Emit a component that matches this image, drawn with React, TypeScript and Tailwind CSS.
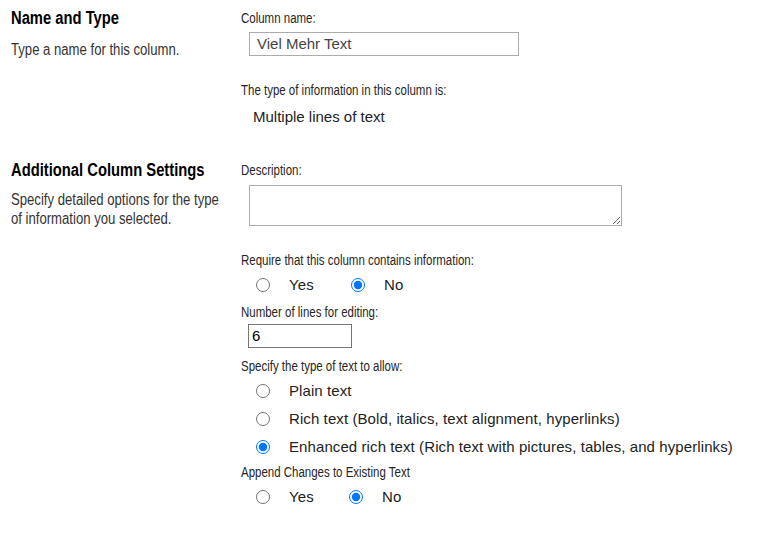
const sans = "font-['Liberation_Sans',Arial,sans-serif]";

// condensed look: plain sans squeezed horizontally
const Narrow = ({ children, className = "" }: { children: React.ReactNode; className?: string }) => (
  <div className={`${sans} ${className}`}>
    <span className="inline-block origin-left scale-x-[0.82] whitespace-nowrap">{children}</span>
  </div>
);

const Label = ({ children }: { children: React.ReactNode }) => (
  <Narrow className="text-[14px] leading-[15px] text-[#262626]">{children}</Narrow>
);

const Heading = ({ children }: { children: React.ReactNode }) => (
  <Narrow className="text-[18px] font-bold leading-[19px] text-black">{children}</Narrow>
);

const Radio = ({
  name,
  label,
  checked,
  width,
}: {
  name: string;
  label: string;
  checked?: boolean;
  width?: string;
}) => (
  <label className={`flex items-center ${width ?? ""}`}>
    <input
      type="radio"
      name={name}
      defaultChecked={checked}
      className="m-0 ml-[15px] h-[14px] w-[14px] accent-[#0075ff]"
    />
    <span className={`${sans} ml-[19px] text-[15px] tracking-[0.09px] text-[#222]`}>{label}</span>
  </label>
);

const App = () => {
  return (
    <div className="h-[542px] w-[784px] bg-white">
      {/* Name and Type */}
      <div className="flex pt-[9px]">
        <div className="w-[241px] pl-[11px]">
          <Heading>Name and Type</Heading>
          <Narrow className="mt-[12px] text-[16px] leading-[19px] text-[#333]">
            Type a name for this column.
          </Narrow>
        </div>
        <div className="flex-1">
          <div className="pt-[2px]">
            <Label>Column name:</Label>
          </div>
          <div className="mt-[6px] ml-[8px] flex h-[24px] w-[270px] items-center border border-[#ababab] px-[7px]">
            <span className={`${sans} text-[15px] text-[#444]`}>Viel Mehr Text</span>
          </div>
          <div className="mt-[27px]">
            <Label>The type of information in this column is:</Label>
          </div>
          <div className={`${sans} mt-[10px] ml-[12px] text-[15px] leading-[18px] text-[#222]`}>
            Multiple lines of text
          </div>
        </div>
      </div>

      {/* Additional Column Settings */}
      <div className="mt-[35px] flex">
        <div className="w-[241px] pl-[11px]">
          <Heading>Additional Column Settings</Heading>
          <Narrow className="mt-[10px] text-[16px] leading-[19px] text-[#333]">
            Specify detailed options for the type
            <br />
            of information you selected.
          </Narrow>
        </div>
        <div className="flex-1">
          <div className="pt-[2px]">
            <Label>Description:</Label>
          </div>
          <textarea className="mt-[7px] ml-[8px] block h-[41px] w-[373px] border border-[#ababab] outline-none" />

          <div className="mt-[27px]">
            <Label>Require that this column contains information:</Label>
          </div>
          <div className="mt-[8px] flex h-[18px]">
            <Radio name="required" label="Yes" width="w-[95px]" />
            <Radio name="required" label="No" checked />
          </div>

          <div className="mt-[11px]">
            <Label>Number of lines for editing:</Label>
          </div>
          <div className="mt-[4px] ml-[7px] flex h-[24px] w-[104px] items-center border border-[#767676] px-[3px]">
            <span className={`${sans} text-[15px] text-black`}>6</span>
          </div>

          <div className="mt-[11px]">
            <Label>Specify the type of text to allow:</Label>
          </div>
          <div className="mt-[6px] flex flex-col gap-[10px]">
            <div className="h-[18px]">
              <Radio name="texttype" label="Plain text" />
            </div>
            <div className="h-[18px]">
              <Radio name="texttype" label="Rich text (Bold, italics, text alignment, hyperlinks)" />
            </div>
            <div className="h-[18px]">
              <Radio
                name="texttype"
                label="Enhanced rich text (Rich text with pictures, tables, and hyperlinks)"
                checked
              />
            </div>
          </div>

          <div className="mt-[11px]">
            <Label>Append Changes to Existing Text</Label>
          </div>
          <div className="mt-[8px] flex h-[18px]">
            <Radio name="append" label="Yes" width="w-[93px]" />
            <Radio name="append" label="No" checked />
          </div>
        </div>
      </div>
    </div>
  );
};

export default App;
